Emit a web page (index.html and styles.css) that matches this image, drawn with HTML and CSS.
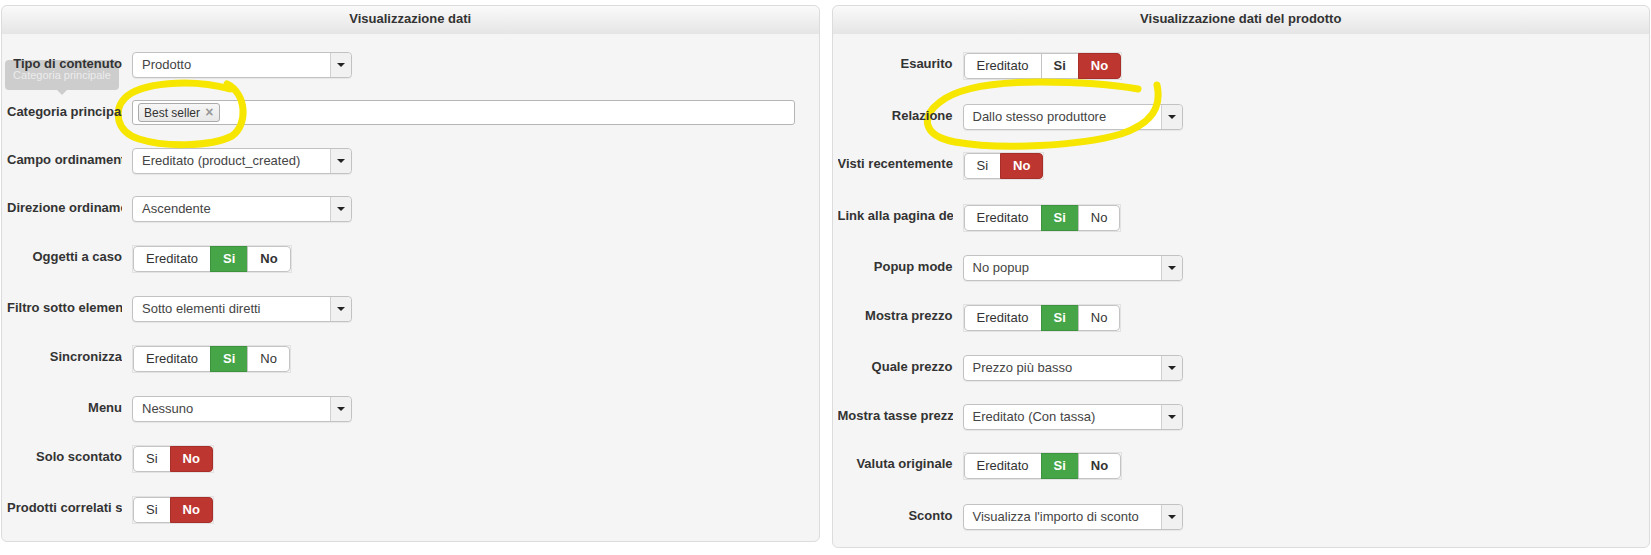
FILE: index.html
```html
<!DOCTYPE html>
<html lang="it">
<head>
    <meta charset="UTF-8">
    <title>Visualizzazione dati</title>
    <link rel="stylesheet" href="styles.css">
</head>
<body>

    <div class="page">
        <div class="panel">
            <div class="panel-header">Visualizzazione dati</div>
            <div class="panel-body">

                <div class="tooltip">Categoria principale</div>

                <div class="row">
                    <div class="label">Tipo di contenuto</div>
                    <div class="select"><span class="value">Prodotto</span><span class="caret-box"><span class="caret"></span></span></div>
                </div>

                <div class="row">
                    <div class="label">Categoria principale</div>
                    <div class="tag-input">
                        <span class="tag">Best seller <span class="tag-close">&times;</span></span>
                    </div>
                </div>

                <div class="row">
                    <div class="label">Campo ordinamento</div>
                    <div class="select"><span class="value">Ereditato (product_created)</span><span class="caret-box"><span class="caret"></span></span></div>
                </div>

                <div class="row">
                    <div class="label">Direzione ordinamento</div>
                    <div class="select"><span class="value">Ascendente</span><span class="caret-box"><span class="caret"></span></span></div>
                </div>

                <div class="row toggle-row">
                    <div class="label">Oggetti a caso</div>
                    <div class="toggle">
                        <span class="opt">Ereditato</span><span class="opt yes">Si</span><span class="opt strong">No</span>
                    </div>
                </div>

                <div class="row">
                    <div class="label">Filtro sotto elementi</div>
                    <div class="select"><span class="value">Sotto elementi diretti</span><span class="caret-box"><span class="caret"></span></span></div>
                </div>

                <div class="row toggle-row">
                    <div class="label">Sincronizza</div>
                    <div class="toggle">
                        <span class="opt">Ereditato</span><span class="opt yes">Si</span><span class="opt">No</span>
                    </div>
                </div>

                <div class="row">
                    <div class="label">Menu</div>
                    <div class="select"><span class="value">Nessuno</span><span class="caret-box"><span class="caret"></span></span></div>
                </div>

                <div class="row toggle-row">
                    <div class="label">Solo scontato</div>
                    <div class="toggle">
                        <span class="opt">Si</span><span class="opt no">No</span>
                    </div>
                </div>

                <div class="row toggle-row">
                    <div class="label">Prodotti correlati se vuoto</div>
                    <div class="toggle">
                        <span class="opt">Si</span><span class="opt no">No</span>
                    </div>
                </div>

            </div>
        </div>

        <div class="panel">
            <div class="panel-header">Visualizzazione dati del prodotto</div>
            <div class="panel-body">

                <div class="row toggle-row">
                    <div class="label">Esaurito</div>
                    <div class="toggle">
                        <span class="opt">Ereditato</span><span class="opt strong">Si</span><span class="opt no">No</span>
                    </div>
                </div>

                <div class="row">
                    <div class="label">Relazione</div>
                    <div class="select"><span class="value">Dallo stesso produttore</span><span class="caret-box"><span class="caret"></span></span></div>
                </div>

                <div class="row toggle-row">
                    <div class="label">Visti recentemente</div>
                    <div class="toggle">
                        <span class="opt">Si</span><span class="opt no">No</span>
                    </div>
                </div>

                <div class="row toggle-row">
                    <div class="label">Link alla pagina del prodotto</div>
                    <div class="toggle">
                        <span class="opt">Ereditato</span><span class="opt yes">Si</span><span class="opt">No</span>
                    </div>
                </div>

                <div class="row">
                    <div class="label">Popup mode</div>
                    <div class="select"><span class="value">No popup</span><span class="caret-box"><span class="caret"></span></span></div>
                </div>

                <div class="row toggle-row">
                    <div class="label">Mostra prezzo</div>
                    <div class="toggle">
                        <span class="opt">Ereditato</span><span class="opt yes">Si</span><span class="opt">No</span>
                    </div>
                </div>

                <div class="row">
                    <div class="label">Quale prezzo</div>
                    <div class="select"><span class="value">Prezzo più basso</span><span class="caret-box"><span class="caret"></span></span></div>
                </div>

                <div class="row">
                    <div class="label">Mostra tasse prezzo</div>
                    <div class="select"><span class="value">Ereditato (Con tassa)</span><span class="caret-box"><span class="caret"></span></span></div>
                </div>

                <div class="row toggle-row">
                    <div class="label">Valuta originale</div>
                    <div class="toggle">
                        <span class="opt">Ereditato</span><span class="opt yes">Si</span><span class="opt strong">No</span>
                    </div>
                </div>

                <div class="row">
                    <div class="label">Sconto</div>
                    <div class="select"><span class="value">Visualizza l'importo di sconto</span><span class="caret-box"><span class="caret"></span></span></div>
                </div>

            </div>
        </div>

        <!-- hand-drawn highlight marks over the screenshot -->
        <svg class="marks" width="1651" height="555" viewBox="0 0 1651 555">
            <path d="M227 84 C247 94 248 125 232 136 C210 147 164 147 139 139 C116 132 113 110 125 98 C140 83 190 78 230 89" />
            <path d="M1157 85 C1162 108 1151 124 1121 134 C1080 146 1000 150 955 142 C923 136 920 117 940 102 C960 86 1000 82 1040 82 C1080 82 1110 84 1138 89" />
        </svg>
    </div>

</body>
</html>
```

FILE: styles.css
```css
body {
    margin: 0;
    font-family: "Liberation Sans", Arial, sans-serif;
    font-size: 13px;
    color: #333;
    background-color: #fff;
}

.page {
    position: relative;
    display: grid;
    grid-template-columns: 1fr 1fr;
    align-items: start;
    column-gap: 12px;
    padding: 5px 1px 0 1px;
}

.panel {
    position: relative;
    background-color: #f5f5f5;
    border: 1px solid #dcdcdc;
    border-radius: 6px;
}

.panel-header {
    height: 28px;
    line-height: 25px;
    text-align: center;
    font-weight: bold;
    color: #333;
    background: linear-gradient(to bottom, #fafafa, #e5e5e5);
    border-radius: 6px 6px 0 0;
}

.panel-body {
    position: relative;
    padding: 18px 0 17px 5px;
}

.row {
    display: flex;
    align-items: flex-start;
    margin-bottom: 22.4px;
}

.toggle-row {
    margin-bottom: 23.6px;
}

.row:last-child {
    margin-bottom: 0;
}

.label {
    position: relative;
    z-index: 1;
    width: 115px;
    margin-right: 10px;
    padding-top: 3px;
    line-height: 17px;
    font-weight: bold;
    text-align: right;
    white-space: nowrap;
    overflow: hidden;
    flex-shrink: 0;
}

/* select boxes */
.select {
    display: flex;
    width: 220px;
    height: 26px;
    box-sizing: border-box;
    background-color: #fff;
    border: 1px solid #c2c2c2;
    border-radius: 4px;
    box-shadow: 0 1px 1px rgba(0, 0, 0, 0.06);
}

.select .value {
    flex: 1;
    padding-left: 9px;
    line-height: 24px;
    color: #444;
    white-space: nowrap;
    overflow: hidden;
}

.caret-box {
    width: 20px;
    display: flex;
    align-items: center;
    justify-content: center;
    background-color: #f1f1f1;
    border-left: 1px solid #d0d0d0;
    border-radius: 0 4px 4px 0;
}

.caret {
    width: 0;
    height: 0;
    border-left: 4px solid transparent;
    border-right: 4px solid transparent;
    border-top: 4px solid #222;
}

/* tag input */
.tag-input {
    flex: 1;
    margin-right: 24px;
    height: 25px;
    box-sizing: border-box;
    padding: 2px 0 0 5px;
    background-color: #fff;
    border: 1px solid #b5b5b5;
    border-radius: 3px;
}

.tag {
    display: inline-block;
    height: 19px;
    box-sizing: border-box;
    padding: 0 5px 0 5px;
    line-height: 17px;
    font-size: 12px;
    color: #333;
    background: linear-gradient(to bottom, #f6f6f6, #e8e8e8);
    border: 1px solid #aaa;
    border-radius: 3px;
}

.tag-close {
    margin-left: 2px;
    font-size: 14px;
    font-weight: bold;
    color: #999;
}

/* yes / no toggles */
.toggle {
    display: inline-flex;
    border: 1px solid #e2e2e2;
}

.opt {
    height: 26px;
    box-sizing: border-box;
    padding: 0 12px;
    line-height: 24px;
    color: #333;
    background-color: #fff;
    border: 1px solid #c4c4c4;
    margin-left: -1px;
}

.opt:first-child {
    margin-left: 0;
    border-radius: 4px 0 0 4px;
}

.opt:last-child {
    border-radius: 0 4px 4px 0;
}

.opt.strong {
    font-weight: bold;
}

.opt.yes {
    color: #fff;
    font-weight: bold;
    background-color: #46a546;
    border-color: #3d923d;
}

.opt.no {
    color: #fff;
    font-weight: bold;
    background-color: #bd362f;
    border-color: #a82f29;
}

/* faded tooltip */
.tooltip {
    position: absolute;
    left: 3px;
    top: 26px;
    width: 114px;
    height: 30px;
    line-height: 30px;
    text-align: center;
    font-size: 11px;
    color: #ececec;
    background-color: #cdcdcd;
    border-radius: 4px;
}

.tooltip::after {
    content: "";
    position: absolute;
    left: 52px;
    bottom: -5px;
    border-left: 5px solid transparent;
    border-right: 5px solid transparent;
    border-top: 5px solid #cdcdcd;
}

.marks {
    position: absolute;
    left: 0;
    top: 0;
    pointer-events: none;
}

.marks path {
    fill: none;
    stroke: #f6e600;
    stroke-width: 7;
    stroke-linecap: round;
}
```
